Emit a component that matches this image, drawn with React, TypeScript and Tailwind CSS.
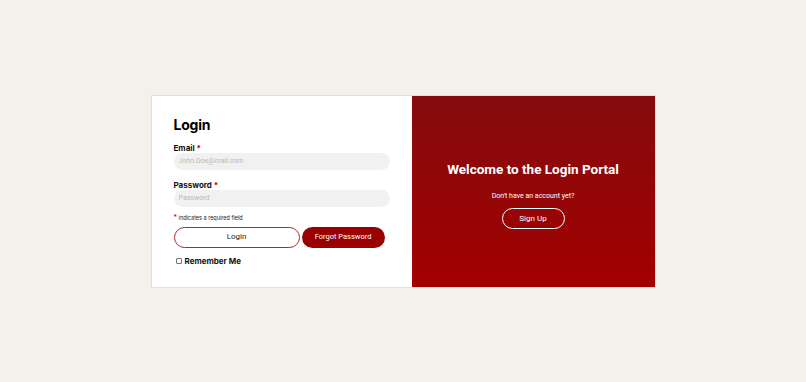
import React from "react";

export default function App() {
  return (
    <div className="min-h-screen w-full bg-[#f4f1eb] flex items-center justify-center">
      <div className="flex w-[505px] h-[193px] border border-[#e4dedb]">
        <div className="w-[260px] bg-white pl-[22px] pr-[22px] pt-[20px] font-['Inter',sans-serif]">
          <h1 className="text-[14px] font-bold leading-[18px] text-black tracking-[-0.2px]">Login</h1>
          <div className="mt-[9px] text-[8px] font-bold leading-[10px] text-[#111]">
            Email <span className="text-[#c00000]">*</span>
          </div>
          <input
            className="block w-[216px] h-[17px] rounded-full bg-[#f1f1f1] px-[5px] text-[7px] font-['Roboto',sans-serif] outline-none placeholder:text-[#b8b8b8]"
            placeholder="John.Doe@mail.com"
          />
          <div className="mt-[10px] text-[8px] font-bold leading-[10px] text-[#111]">
            Password <span className="text-[#c00000]">*</span>
          </div>
          <input
            className="block w-[216px] h-[17px] rounded-full bg-[#f1f1f1] px-[5px] text-[7px] font-['Roboto',sans-serif] outline-none placeholder:text-[#b8b8b8]"
            placeholder="Password"
            type="password"
          />
          <div className="mt-[7px] text-[5.5px] leading-[8px] text-[#222]">
            <span className="text-[#c00000] text-[7px]">*</span> indicates a required field
          </div>
          <div className="mt-[5px] flex gap-[2px]">
            <button className="w-[126px] h-[21px] rounded-full border-[1.5px] border-[#b0282c] bg-white text-[8px] text-[#222] font-['Roboto',sans-serif]">
              Login
            </button>
            <button className="w-[83px] h-[21px] rounded-full bg-[#9b0000] text-[7.5px] text-white font-['Roboto',sans-serif]">
              Forgot Password
            </button>
          </div>
          <label className="mt-[8px] flex items-center gap-[3px] text-[8px] font-bold leading-[10px] text-[#111]">
            <span className="ml-[2px] inline-block w-[6px] h-[6px] border border-[#777] rounded-[1px] bg-white"></span>
            Remember Me
          </label>
        </div>
        <div className="flex-1 bg-gradient-to-b from-[#850b0d] to-[#a20000] flex flex-col items-center justify-center pt-[8px] font-['Roboto',sans-serif] text-white">
          <h2 className="text-[13.5px] font-bold leading-[16px]">Welcome to the Login Portal</h2>
          <p className="mt-[15px] text-[7px] leading-[9px]">Don't have an account yet?</p>
          <button className="mt-[7px] w-[63px] h-[21px] rounded-full border border-white text-[8px] text-white">
            Sign Up
          </button>
        </div>
      </div>
    </div>
  );
}
